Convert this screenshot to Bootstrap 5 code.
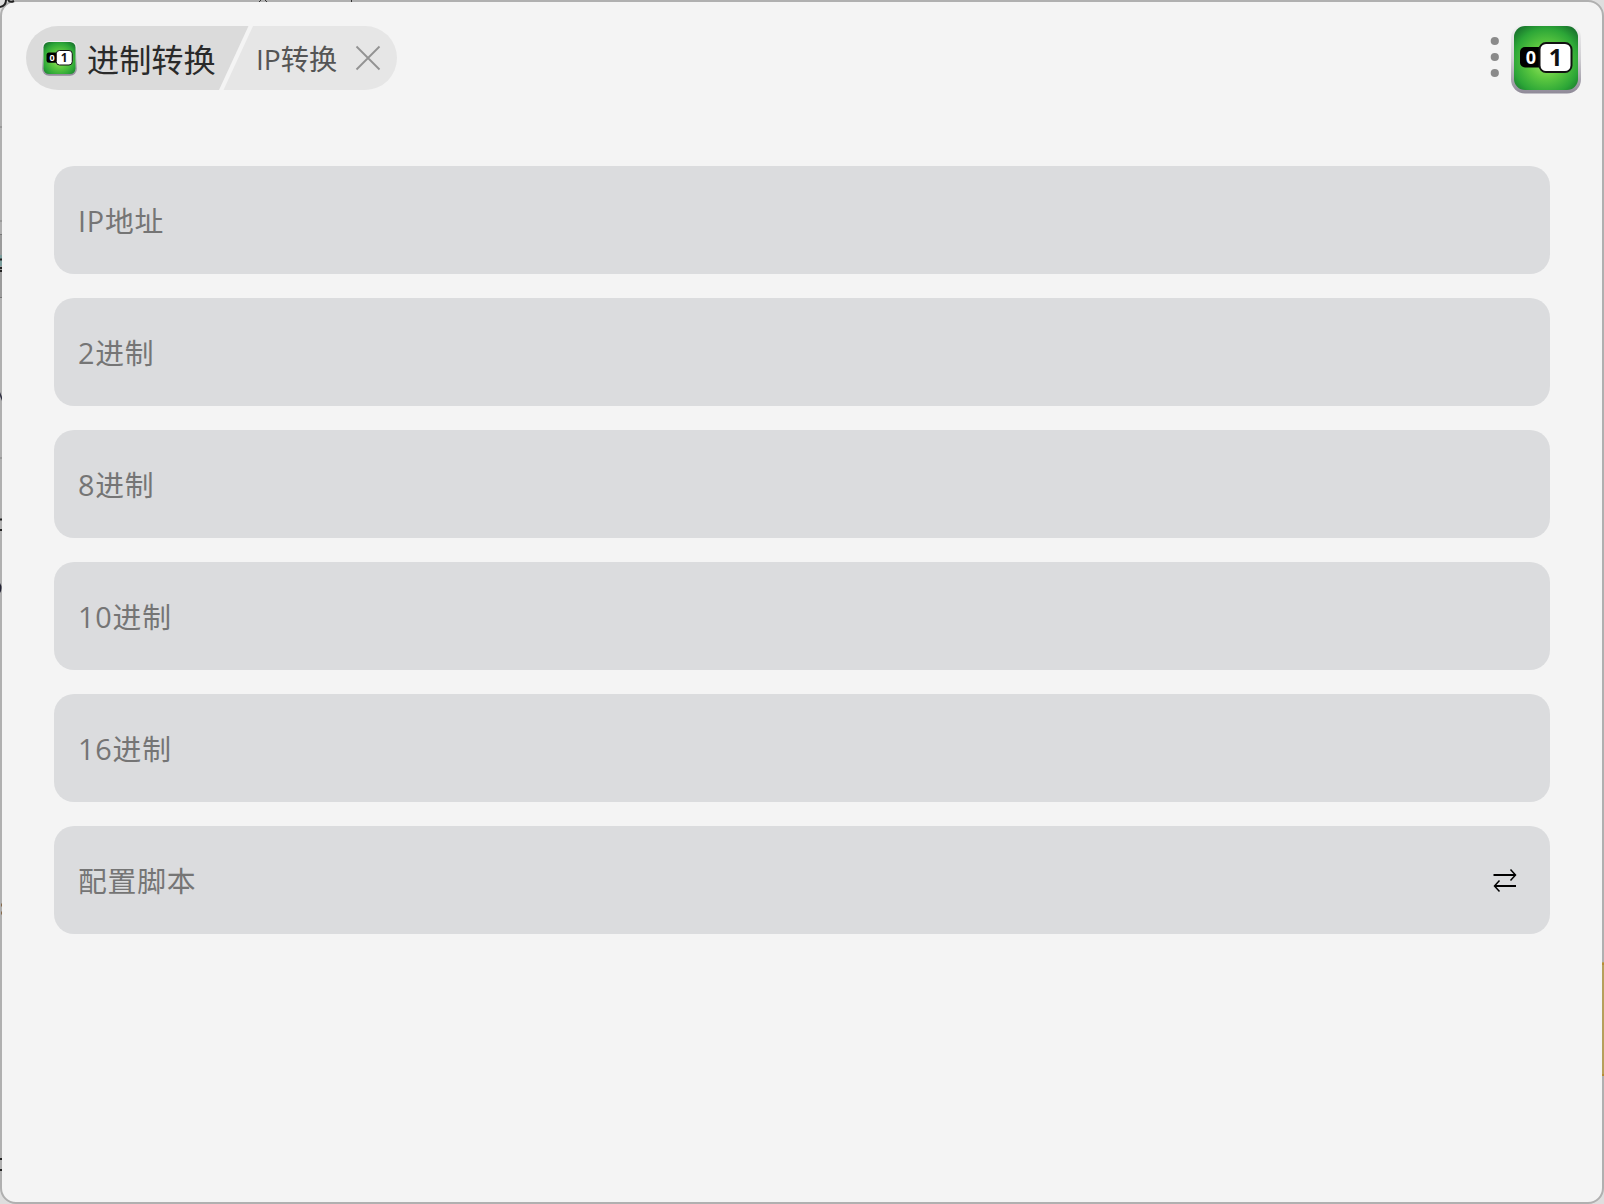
<!DOCTYPE html>
<html lang="zh-CN">
<head>
<meta charset="utf-8">
<title>进制转换</title>
<link href="https://cdn.jsdelivr.net/npm/bootstrap@5.3.0/dist/css/bootstrap.min.css" rel="stylesheet">
<style>
body{width:1604px;height:1204px;overflow:hidden;background:#dedede;font-family:"Open Sans","Noto Sans CJK SC",sans-serif}
.app-window{width:1604px;height:1204px;background:#f4f4f4;border:2px solid #b0b0b0;border-radius:16px;padding:24px 21px 0 24px}
.topbar{height:70px}
.crumbs{width:371px;height:64px}
.tab-shape{width:371px;height:64px;z-index:0}
.crumb-main{z-index:1;padding-left:16px;width:206px}
.crumb-main span{font-size:32.2px;line-height:64px;color:#2a2a2a;padding-top:3px;margin-left:10px}
.crumb-sub{z-index:1;font-size:28.2px;line-height:64px;color:#555;margin-left:24px;padding-top:1px;width:83px}
.close-x{z-index:1;margin-left:16px}
.converter{padding:70px 31px 0 28px;gap:24px}
.field{height:108px;background:#dbdcde;border-radius:20px;padding:0 32px 0 24px}
.field .form-control,.field .form-control:focus{font-size:28.8px;letter-spacing:.8px;line-height:44px;color:#222;box-shadow:none;height:60px}
.field .form-control::placeholder{color:#757575;opacity:1}
.edge-marks{inset:0;pointer-events:none}
.digit{font-family:"Open Sans",sans-serif;font-weight:700}
.app-logo{margin-top:-2px}
</style>
<script src="https://cdn.jsdelivr.net/npm/bootstrap@5.3.0/dist/js/bootstrap.bundle.min.js"></script>
</head>
<body>
<svg width="0" height="0" class="position-absolute">
<defs>
<radialGradient id="green" cx=".5" cy=".55" r=".68"><stop offset="0" stop-color="#a4ea66"/><stop offset=".4" stop-color="#5cc840"/><stop offset=".75" stop-color="#2ca637"/><stop offset="1" stop-color="#17702c"/></radialGradient>
<linearGradient id="rim" x1="0" y1="0" x2="0" y2="1"><stop offset="0" stop-color="#f3f3f3"/><stop offset=".5" stop-color="#cfced2"/><stop offset="1" stop-color="#8f8a98"/></linearGradient>
<symbol id="logo" viewBox="0 0 70 70">
<rect width="70" height="69.5" rx="14" fill="url(#rim)"/>
<rect x="3" y="2" width="64" height="64" rx="11" fill="url(#green)"/>
<rect x="9" y="23" width="26" height="20.500" rx="5" fill="#000"/>
<rect x="28.500" y="19" width="32" height="29" rx="6.500" fill="#fff" stroke="#111" stroke-width="2"/>
<text class="digit" x="20" y="40" font-size="18" text-anchor="middle" fill="#fff">0</text>
<text class="digit" x="44.500" y="42" font-size="24" text-anchor="middle" fill="#111">1</text>
</symbol>
</defs>
</svg>
<main class="app-window position-relative">
<header class="topbar d-flex justify-content-between align-items-start">
<nav class="crumbs position-relative d-flex align-items-center">
<svg class="tab-shape position-absolute top-0 start-0" viewBox="0 0 371 64"><path d="M32 0H222.500L193 64H32A32 32 0 0 1 32 0Z" fill="#dbdbdb"/><path d="M227 0H339A32 32 0 0 1 339 64H197.500Z" fill="#e6e6e6"/></svg>
<a class="crumb-main d-flex align-items-center text-decoration-none text-nowrap position-relative" href="#"><svg width="35" height="35"><use href="#logo"/></svg><span>进制转换</span></a>
<span class="crumb-sub text-nowrap position-relative">IP转换</span>
<svg class="close-x position-relative" width="26" height="26" viewBox="0 0 26 26"><path d="M1.500 1.500L24.500 24.500M24.500 1.500L1.500 24.500" stroke="#929292" stroke-width="1.800"/></svg>
</nav>
<div class="d-flex align-items-start">
<svg width="21" height="64" viewBox="0 0 21 64" fill="#8a8a8a"><circle cx="4.800" cy="15" r="4.100"/><circle cx="4.800" cy="31" r="4.100"/><circle cx="4.800" cy="47" r="4.100"/></svg>
<svg class="app-logo" width="70" height="70"><use href="#logo"/></svg>
</div>
</header>
<section class="converter d-flex flex-column">
<div class="field d-flex align-items-center"><input class="form-control bg-transparent border-0 p-0" placeholder="IP地址"></div>
<div class="field d-flex align-items-center"><input class="form-control bg-transparent border-0 p-0" placeholder="2进制"></div>
<div class="field d-flex align-items-center"><input class="form-control bg-transparent border-0 p-0" placeholder="8进制"></div>
<div class="field d-flex align-items-center"><input class="form-control bg-transparent border-0 p-0" placeholder="10进制"></div>
<div class="field d-flex align-items-center"><input class="form-control bg-transparent border-0 p-0" placeholder="16进制"></div>
<div class="field d-flex align-items-center"><input class="form-control bg-transparent border-0 p-0" placeholder="配置脚本"><svg class="flex-shrink-0" width="26" height="26" viewBox="0 0 26 26" fill="none" stroke="#000"><path d="M1.500 8H23M24 19H3" stroke-width="2"/><path d="M18.500 2.500L23.500 8L18.500 13.500M7.500 13.500L2.500 19L7.500 24.500" stroke-width="1.500"/></svg></div>
</section>
</main>
<svg class="edge-marks position-absolute" width="1604" height="1204">
<path d="M0 7Q6 6 6 0M8 0Q10 3 14 1" fill="none" stroke="#222" stroke-width="2"/>
<path d="M259 2L261 0M267 2L265 0M351.500 0V2" stroke="#333"/>
<path d="M0 127H2M0 221H2M0 458H2" stroke="#999" stroke-width="2"/><path d="M0 234.500H2M0 297.500H2" stroke="#777"/>
<path d="M0 235H2V297H0Z" fill="#9b9b9b"/><path d="M0 255H2V266H0Z" fill="#7b9d9c"/>
<path d="M0 259.500H2M0 268H2M0 271H2M0 519.500H2M0 530H2M0 1159H2M0 1170H2" stroke="#222" stroke-width="2"/>
<path d="M0 392L2 397V401L0 396Z" fill="#334"/><path d="M0 583Q3 588 0 593Z" fill="#223"/>
<path d="M1 905H2M1 913H2" stroke="#876a4b" stroke-width="3"/>
<path d="M1602 962H1604V1076H1602Z" fill="#b6a05c"/><path d="M1602 964H1604M1602 1075H1604" stroke="#b78d35" stroke-width="2"/>
</svg>
</body>
</html>
